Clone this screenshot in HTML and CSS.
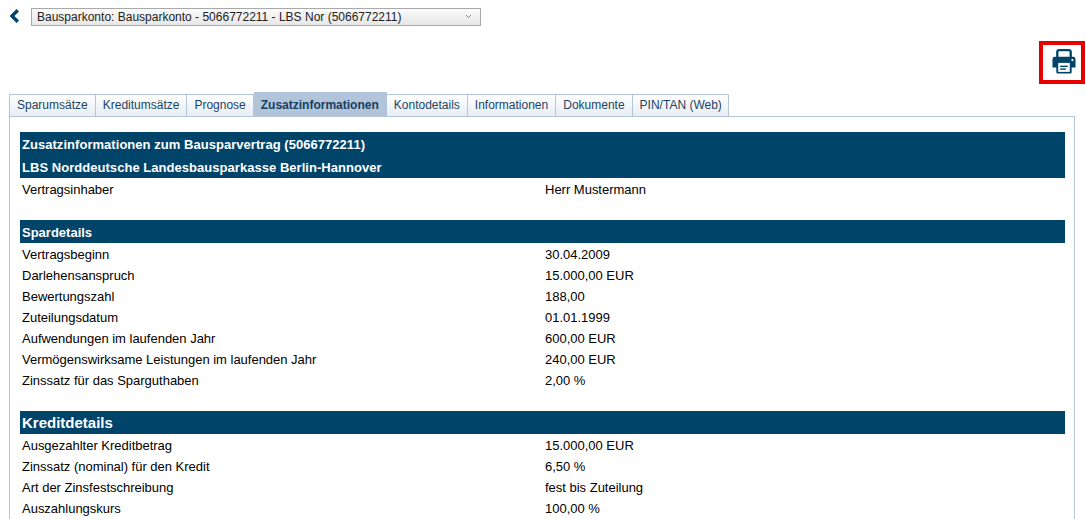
FILE: index.html
```html
<!DOCTYPE html>
<html lang="de">
<head>
    <meta charset="UTF-8">
    <title>Zusatzinformationen</title>
    <link rel="stylesheet" href="styles.css">
</head>
<body>
    <div class="topbar">
        <a href="#" class="back">
            <svg width="11" height="14" viewBox="0 0 11 14"><path d="M8.800 1.200 3 7 8.800 12.800" fill="none" stroke="#00446a" stroke-width="3.400"/></svg>
        </a>
        <div class="select-box">
            <select class="account">
                <option>Bausparkonto: Bausparkonto - 5066772211 - LBS Nor (5066772211)</option>
            </select>
            <svg class="select-arrow" width="7" height="5" viewBox="0 0 7 5"><path d="M1 1 3.500 3.500 6 1" fill="none" stroke="#888" stroke-width="1"/></svg>
        </div>
    </div>

    <div class="toolbar">
        <a href="#" class="print">
            <svg width="24" height="25" viewBox="0 0 25 27" preserveAspectRatio="none">
                <path d="M5.500 11V3.200Q5.500 1.200 7.500 1.200H17.500Q19.500 1.200 19.500 3.200V11" fill="none" stroke="#00446a" stroke-width="2.400"/>
                <path d="M3 8.500H22Q24.500 8.500 24.500 11V20H20.500V25Q20.500 26.500 19 26.500H6Q4.500 26.500 4.500 25V20H.5V11Q.5 8.500 3 8.500Z" fill="#00446a"/>
                <rect x="6.500" y="15" width="12" height="9.700" fill="#fff"/>
                <rect x="8.500" y="18" width="8" height="1.500" fill="#00446a"/>
                <rect x="8.500" y="21" width="6" height="1.500" fill="#00446a"/>
                <circle cx="21.300" cy="12" r="1.200" fill="#fff"/>
            </svg>
        </a>
    </div>

    <ul class="tabs">
        <li>Sparumsätze</li>
        <li>Kreditumsätze</li>
        <li>Prognose</li>
        <li class="active">Zusatzinformationen</li>
        <li>Kontodetails</li>
        <li>Informationen</li>
        <li>Dokumente</li>
        <li class="last">PIN/TAN (Web)</li>
    </ul>

    <div class="panel">
        <div class="head-main">
            <div>Zusatzinformationen zum Bausparvertrag (5066772211)</div>
            <div>LBS Norddeutsche Landesbausparkasse Berlin-Hannover</div>
        </div>
        <div class="row"><span>Vertragsinhaber</span><span>Herr Mustermann</span></div>

        <div class="head-section">Spardetails</div>
        <div class="row"><span>Vertragsbeginn</span><span>30.04.2009</span></div>
        <div class="row"><span>Darlehensanspruch</span><span>15.000,00 EUR</span></div>
        <div class="row"><span>Bewertungszahl</span><span>188,00</span></div>
        <div class="row"><span>Zuteilungsdatum</span><span>01.01.1999</span></div>
        <div class="row"><span>Aufwendungen im laufenden Jahr</span><span>600,00 EUR</span></div>
        <div class="row"><span>Vermögenswirksame Leistungen im laufenden Jahr</span><span>240,00 EUR</span></div>
        <div class="row"><span>Zinssatz für das Sparguthaben</span><span>2,00 %</span></div>

        <div class="head-section large">Kreditdetails</div>
        <div class="row"><span>Ausgezahlter Kreditbetrag</span><span>15.000,00 EUR</span></div>
        <div class="row"><span>Zinssatz (nominal) für den Kredit</span><span>6,50 %</span></div>
        <div class="row"><span>Art der Zinsfestschreibung</span><span>fest bis Zuteilung</span></div>
        <div class="row"><span>Auszahlungskurs</span><span>100,00 %</span></div>
    </div>
</body>
</html>
```

FILE: styles.css
```css
html, body {
    height: 100%;
    overflow: hidden;
}
body {
    display: flex;
    flex-direction: column;
    margin: 0;
    padding: 8px 11px 0 9px;
    box-sizing: border-box;
    background-color: white;
    font-family: "Liberation Sans", Arial, sans-serif;
    font-size: 12px;
    color: #111;
}
.topbar {
    display: flex;
    align-items: center;
    height: 18px;
}
.back {
    display: flex;
    width: 22px;
    margin-bottom: 2px;
}
.select-box {
    position: relative;
    width: 450px;
    height: 18px;
}
.account {
    display: block;
    width: 100%;
    height: 18px;
    padding: 0 0 0 5px;
    border: 1px solid #a9a9a9;
    border-radius: 0;
    appearance: none;
    background: linear-gradient(#fbfbfb, #e6e6e6);
    font-family: inherit;
    font-size: 12px;
    color: #222;
}
.select-arrow {
    position: absolute;
    top: 6px;
    right: 9px;
}
.toolbar {
    display: flex;
    justify-content: flex-end;
    margin-top: 15px;
    height: 52px;
}
.print {
    display: flex;
    align-items: center;
    justify-content: center;
    box-sizing: border-box;
    width: 46px;
    height: 43px;
    margin-right: -10px;
    padding: 0 0 3px 3px;
    border: 4px solid #e60000;
}
.tabs {
    display: flex;
    align-items: flex-end;
    height: 24px;
    margin: 0;
    padding: 0;
    list-style: none;
}
.tabs li {
    box-sizing: border-box;
    height: 23px;
    padding: 0 7px;
    border: 1px solid #b4c5d6;
    border-left: none;
    background: linear-gradient(#fff, #e6edf5);
    line-height: 21px;
    color: #1d4464;
}
.tabs li:first-child {
    border-left: 1px solid #b4c5d6;
}
.tabs .last {
    padding-right: 6px;
}
.tabs .active {
    height: 25px;
    border-color: #b1c4da;
    background: #b1c4da;
    font-weight: bold;
    line-height: 24px;
    color: #17405f;
}
.panel {
    flex: 1;
    min-height: 0;
    margin-top: -1px;
    padding: 15px 9px 0 10px;
    border: 1px solid #b4c5d6;
    border-bottom: none;
}
.head-main {
    box-sizing: border-box;
    height: 46px;
    padding: 1px 0 0 2px;
    background-color: #00446a;
    font-size: 13px;
    font-weight: bold;
    letter-spacing: 0.04px;
    line-height: 23px;
    color: white;
}
.head-section {
    margin-top: 21px;
    padding: 2px 0 0 2px;
    background-color: #00446a;
    font-size: 13px;
    font-weight: bold;
    line-height: 21px;
    color: white;
}
.head-section.large {
    padding-top: 0;
    line-height: 23px;
    font-size: 15px;
}
.row {
    display: grid;
    grid-template-columns: 523px 1fr;
    box-sizing: border-box;
    padding: 1px 0 0 2px;
    height: 21px;
    font-size: 13px;
    letter-spacing: -0.01px;
    line-height: 21px;
    color: #000;
}
```
